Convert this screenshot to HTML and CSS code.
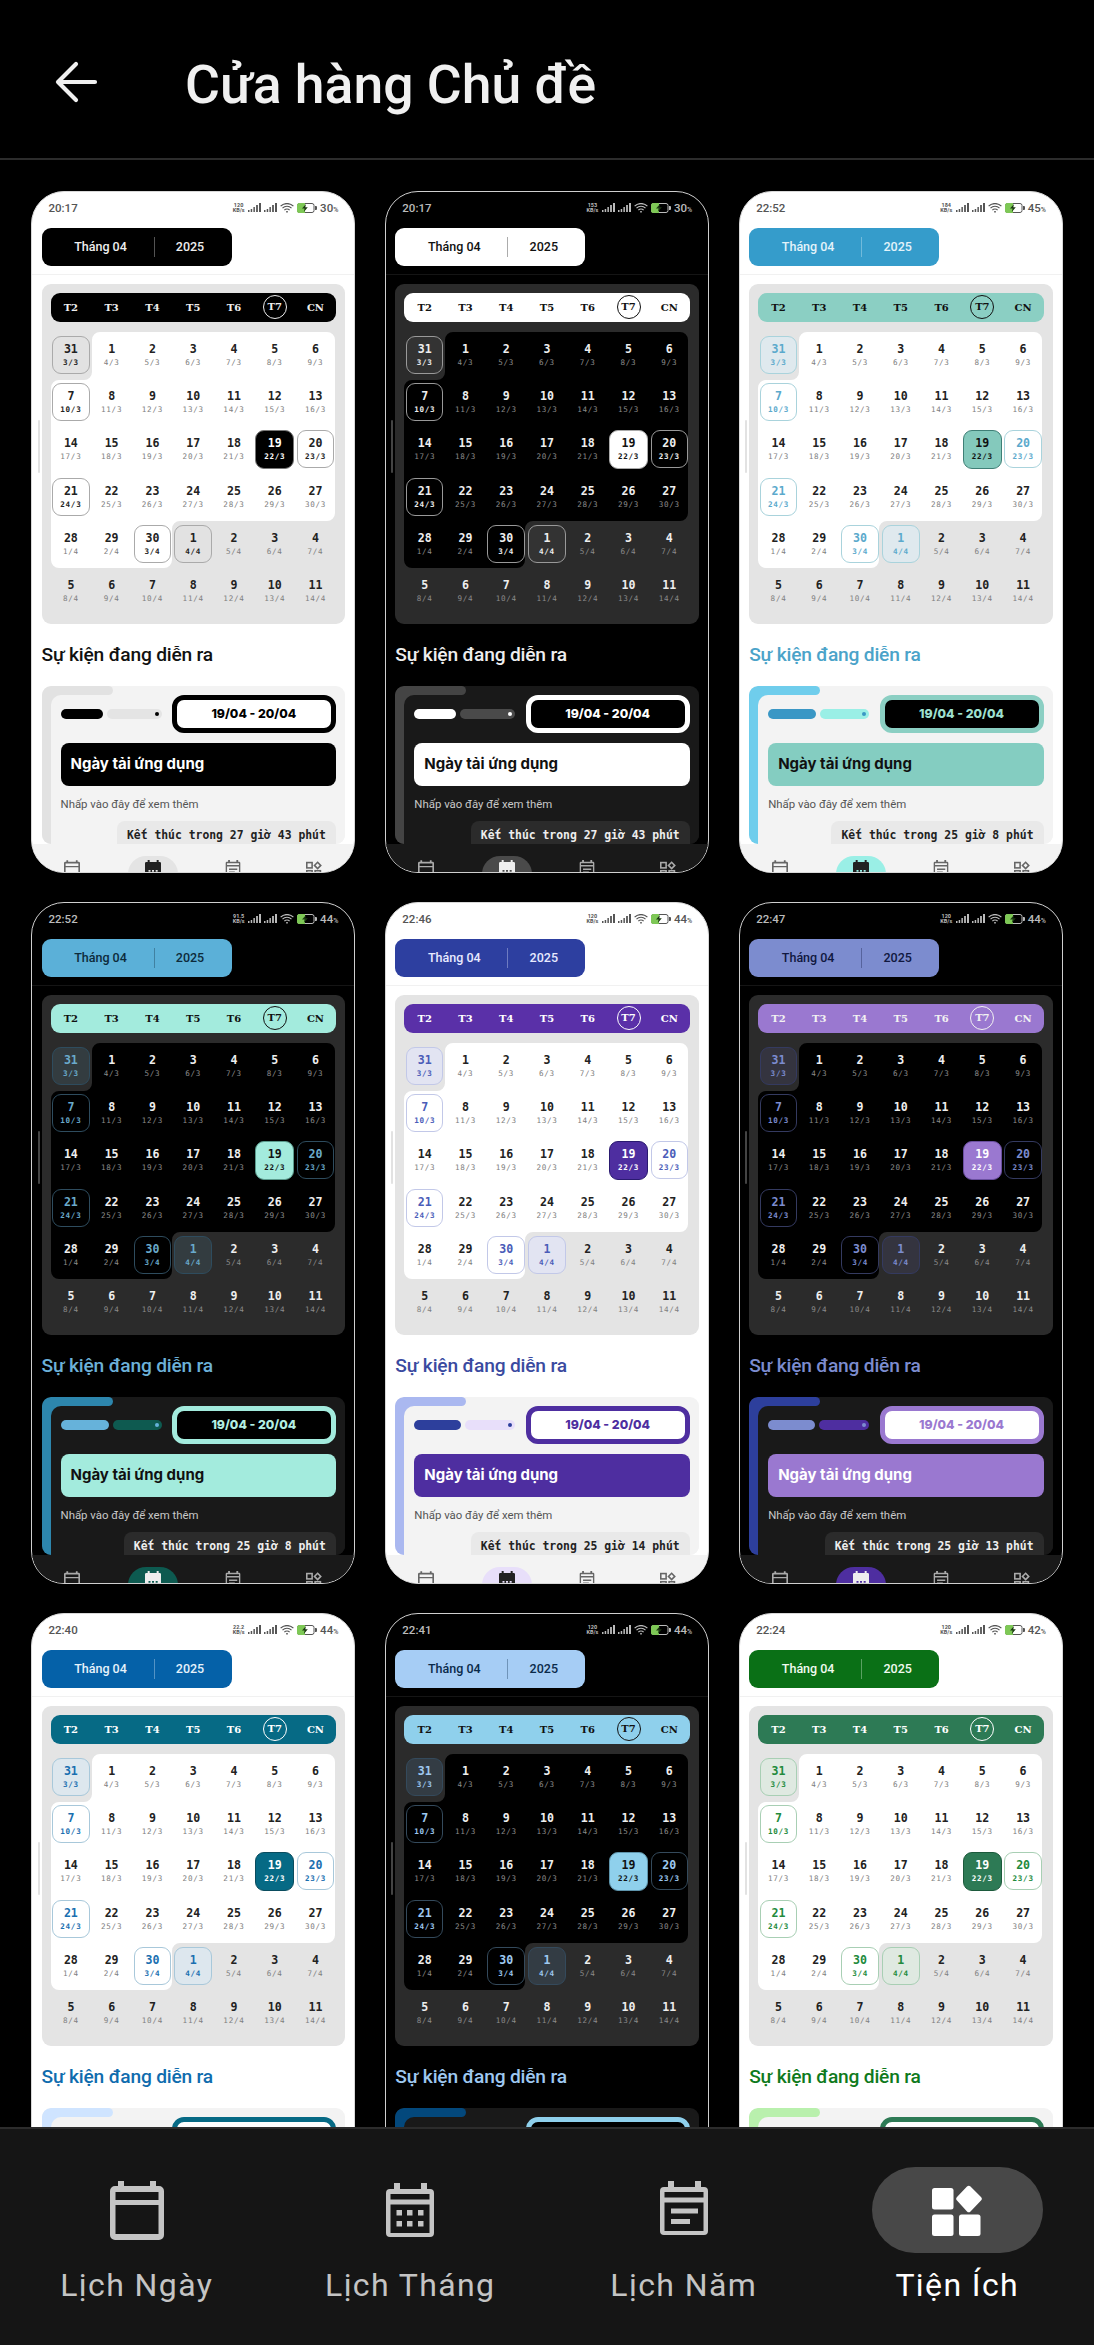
FILE: index.html
```html
<!doctype html>
<html lang="vi">

<head>
	<meta charset="UTF-8">
	<meta name="viewport" content="initial-scale=1">
	<title>Cửa hàng Chủ đề</title>
	<link rel="stylesheet" href="styles.css">
</head>

<body>
	<svg class="sprites" width="0" height="0" aria-hidden="true">
		<symbol id="ic-day" viewBox="0 0 54 59">
			<path fill-rule="evenodd" d="M8 0h6v5h26V0h6v5h3a5 5 0 0 1 5 5v44a5 5 0 0 1-5 5H5a5 5 0 0 1-5-5V10a5 5 0 0 1 5-5h3zM5.500 11v8h43v-8zM5.500 24v29h43V24z" />
		</symbol>
		<symbol id="ic-month" viewBox="0 0 48 54">
			<path fill-rule="evenodd" d="M8 0h6v6h21V0h6v6h3a4 4 0 0 1 4 4v40a4 4 0 0 1-4 4H4a4 4 0 0 1-4-4V10a4 4 0 0 1 4-4h4zM4.500 11v5.500h39V11zM4.500 21.500V50h39V21.500z" />
			<path d="M10.500 27h5.500v5.500h-5.500zM21 27h5.500v5.500H21zM32 27h5.500v5.500H32zM10.500 38h5.500v5.500h-5.500zM21 38h5.500v5.500H21zM32 38h5.500v5.500H32z" />
		</symbol>
		<symbol id="ic-month-fill" viewBox="0 0 48 54">
			<path fill-rule="evenodd" d="M8 0h6v6h21V0h6v6h3a4 4 0 0 1 4 4v40a4 4 0 0 1-4 4H4a4 4 0 0 1-4-4V10a4 4 0 0 1 4-4h4zM10.500 30v5h6v-5zM21 30v5h6v-5zM32 30v5h6v-5z" />
		</symbol>
		<symbol id="ic-year" viewBox="0 0 48 59">
			<path fill-rule="evenodd" d="M8 0h6v6h21V0h6v6h3a4 4 0 0 1 4 4v40a4 4 0 0 1-4 4H4a4 4 0 0 1-4-4V10a4 4 0 0 1 4-4h4zM4.500 11v5.500h39V11zM4.500 21.500V50h39V21.500z" />
			<path d="M11 27.500h27v5H11zM11 38h19v5H11z" />
		</symbol>
		<symbol id="ic-apps" viewBox="0 0 51 51">
			<rect x="0" y="3" width="21.500" height="21.500" rx="2.500" />
			<path d="M35 1.500a2.500 2.500 0 0 1 3.500 0l10.500 10.500a2.500 2.500 0 0 1 0 3.500l-10.500 11a2.500 2.500 0 0 1-3.500 0l-10-11a2.500 2.500 0 0 1 0-3.500z" />
			<rect x="0" y="29.500" width="21.500" height="21.500" rx="2.500" />
			<rect x="27" y="29.500" width="21.500" height="21.500" rx="2.500" />
		</symbol>
		<symbol id="ic-apps-line" viewBox="0 0 51 51">
			<g fill="none" stroke="currentColor" stroke-width="5">
				<rect x="2.500" y="5" width="17" height="17" />
				<path d="M37 4l10 10-10 10-10-10z" />
				<rect x="2.500" y="31" width="17" height="17" />
				<rect x="29" y="31" width="17" height="17" />
			</g>
		</symbol>
		<symbol id="ic-signal" viewBox="0 0 13 9">
			<path d="M0 7h1.500v2H0zM2.700 6h1.500v3H2.700zM5.400 4h1.500v5H5.400zM8.100 2h1.800v7H8.100zM11 0h2v9h-2z" />
		</symbol>
		<symbol id="ic-wifi" viewBox="0 0 14 10">
			<path fill="none" stroke="currentColor" stroke-width="1.200" d="M.6 3.200a9 9 0 0 1 12.800 0M2.500 5.200a6.200 6.200 0 0 1 9 0M4.400 7.200a3.400 3.400 0 0 1 5.200 0" />
			<path d="M5.800 8.600a1.700 1.700 0 0 1 2.400 0L7 10z" />
		</symbol>
		<symbol id="ic-battery" viewBox="0 0 20 10">
			<rect x=".5" y=".5" width="16.500" height="9" rx="2" fill="none" stroke="currentColor" />
			<path d="M2.500 0H8v10H2.500A2.500 2.500 0 0 1 0 7.500v-5A2.500 2.500 0 0 1 2.500 0z" fill="#7ec856" />
			<path d="M18 3h1a1 1 0 0 1 1 1v2a1 1 0 0 1-1 1h-1z" />
			<path d="M9 1L5 5.600h2.600L6.800 9l4-4.700H8.300z" fill="#1c3a12" />
		</symbol>
	</svg>

	<header class="topbar">
		<a class="back">
			<svg width="44" height="42" viewBox="0 0 44 42">
				<path class="back-arrow" d="M41 21H4M22 3L4 21l18 18" />
			</svg>
		</a>
		<h1>Cửa hàng Chủ đề</h1>
	</header>

	<main id="store" class="store"></main>

	<nav class="tabs">
		<a class="tab">
			<span class="tab-icon"><svg class="i-day"><use href="#ic-day" /></svg></span>
			<span class="tab-label">Lịch Ngày</span>
		</a>
		<a class="tab">
			<span class="tab-icon"><svg class="i-cal"><use href="#ic-month" /></svg></span>
			<span class="tab-label">Lịch Tháng</span>
		</a>
		<a class="tab">
			<span class="tab-icon"><svg class="i-year"><use href="#ic-year" /></svg></span>
			<span class="tab-label">Lịch Năm</span>
		</a>
		<a class="tab active">
			<span class="tab-icon"><svg class="i-apps"><use href="#ic-apps" /></svg></span>
			<span class="tab-label">Tiện Ích</span>
		</a>
	</nav>

	<script src="script.js"></script>
</body>

</html>
```

FILE: styles.css
```css
html,
body {
	margin: 0;
	padding: 0;
	width: 100%;
	height: 100%;
	background: #000;
	font-family: Roboto, "Noto Sans", sans-serif;
}

body {
	display: flex;
	flex-direction: column;
	height: 2345px;
	overflow: hidden;
}

.sprites {
	display: block;
	height: 0;
}

svg {
	display: block;
	fill: currentColor;
}

/* top bar */
.topbar {
	flex: none;
	display: flex;
	align-items: center;
	height: 158px;
	padding-left: 54px;
	border-bottom: 2px solid #2c2c2c;
	color: #f0f0f0;
}

.back {
	margin-right: 87px;
	margin-top: 6px;
}

.back-arrow {
	fill: none;
	stroke: currentColor;
	stroke-width: 4.200;
	stroke-linecap: round;
	stroke-linejoin: round;
}

h1 {
	margin: 10px 0 0 0;
	font-size: 53.500px;
	font-weight: 500;
}

/* grid of previews */
.store {
	flex: 1;
	min-height: 0;
	overflow: hidden;
	display: grid;
	grid-template-columns: repeat(3, 1fr);
	grid-auto-rows: 682px;
	gap: 29px 29.5px;
	padding: 31px 31px 0;
}

.phone {
	--bg: #fff;
	--edge: #d8d8d8;
	--rule: #f1f1f1;
	--ink: #222;
	--sub: #808080;
	--status: #555;
	--scroll: #e2e2e2;
	--panel: #e4e4e4;
	--month: #fff;
	--card: #f3f3f3;
	--hint: #555;
	--timer-bg: #e9e9e9;
	--timer-ink: #222;
	--nav: #f3f3f3;
	--nav-icon: #666;
	--nav-active: #222;
	--date-bg: #fff;

	position: relative;
	box-sizing: border-box;
	display: flex;
	flex-direction: column;
	height: 682px;
	border: 1.5px solid var(--edge);
	border-radius: 33px;
	overflow: hidden;
	background: var(--bg);
}

.phone.dark {
	--bg: #000;
	--edge: #cfcfcf;
	--rule: #151515;
	--ink: #eee;
	--sub: #8a8a8a;
	--status: #bbb;
	--scroll: #444;
	--panel: #2b2b2b;
	--month: #000;
	--card: #191919;
	--hint: #c8c8c8;
	--timer-bg: #2b2b2b;
	--timer-ink: #eee;
	--nav: #191919;
	--nav-icon: #aaa;
	--nav-active: #eee;
	--date-bg: #000;
}

/* themes */
.mono-l {
	--head: #000;
	--head-ink: #eee;
	--week: #000;
	--week-ink: #eee;
	--mark-ink: #222;
	--mark-line: #aaa;
	--mark-fill: #e2e2e2;
	--today: #000;
	--today-line: #777;
	--today-ink: #fff;
	--title: #111;
	--accent: #e2e2e2;
	--bar1: #000;
	--bar2: #e4e4e4;
	--date-line: #000;
	--date-ink: #000;
	--banner: #000;
	--banner-ink: #fff;
	--pill: #e4e4e4;
}

.mono-d {
	--head: #fff;
	--head-ink: #111;
	--week: #fff;
	--week-ink: #111;
	--mark-ink: #eee;
	--mark-line: #999;
	--mark-fill: #333;
	--today: #fff;
	--today-line: #aaa;
	--today-ink: #111;
	--title: #eee;
	--accent: #444;
	--bar1: #fff;
	--bar2: #4a4a4a;
	--date-line: #fff;
	--date-ink: #fff;
	--banner: #fff;
	--banner-ink: #111;
	--pill: #4a4a4a;
}

.teal-l {
	--head: #359ccb;
	--head-ink: #e3f3fa;
	--week: #8bcfc3;
	--week-ink: #111;
	--mark-ink: #5ba9cc;
	--mark-line: #a9d3dc;
	--mark-fill: #dfe9ee;
	--today: #84c9bc;
	--today-line: #3f7f76;
	--today-ink: #111;
	--title: #4ba3c9;
	--accent: #6fcdec;
	--bar1: #3a97c5;
	--bar2: #9aefe6;
	--date-line: #8bcfc3;
	--date-bg: #000;
	--date-ink: #9fe0d0;
	--banner: #84cdc1;
	--banner-ink: #111;
	--pill: #9aefe6;
}

.teal-d {
	--head: #5bb0d8;
	--head-ink: #0d2b3b;
	--week: #a3ebdd;
	--week-ink: #111;
	--mark-ink: #6aaacb;
	--mark-line: #2e4c5e;
	--mark-fill: #333c40;
	--today: #a3ebdd;
	--today-line: #5a9a8c;
	--today-ink: #111;
	--title: #6cb1d8;
	--accent: #2d86ad;
	--bar1: #66b2da;
	--bar2: #0e5a50;
	--date-line: #a3ebdd;
	--date-ink: #b4efe3;
	--banner: #a3ebdd;
	--banner-ink: #111;
	--pill: #0d5a50;
}

.violet-l {
	--head: #2d3fa0;
	--head-ink: #e8eaff;
	--week: #5a30a8;
	--week-ink: #fff;
	--mark-ink: #4a5cb8;
	--mark-line: #c2c8e8;
	--mark-fill: #e2e4f2;
	--today: #4e2ea0;
	--today-line: #2a1a70;
	--today-ink: #fff;
	--title: #3a4aa0;
	--accent: #aab8f0;
	--bar1: #2d3f9c;
	--bar2: #e8dffa;
	--date-line: #4e2ea0;
	--date-ink: #4e2ea0;
	--banner: #4e2ea0;
	--banner-ink: #fff;
	--pill: #e8dffa;
}

.phone.violet-d {
	--head: #7c8ccf;
	--head-ink: #101840;
	--week: #9a78d0;
	--week-ink: #f2f2f2;
	--mark-ink: #7c8ccf;
	--mark-line: #343a60;
	--mark-fill: #34343f;
	--today: #9a78d0;
	--today-line: #6a4fa0;
	--today-ink: #fff;
	--title: #7c8ccf;
	--accent: #2d3f9c;
	--bar1: #7c8ccf;
	--bar2: #4e2ea0;
	--date-line: #9a78d0;
	--date-bg: #fff;
	--date-ink: #9a78d0;
	--banner: #9a78d0;
	--banner-ink: #fff;
	--pill: #4e2ea0;
}

.blue-l {
	--head: #0561a8;
	--head-ink: #e6f2fb;
	--week: #066a85;
	--week-ink: #fff;
	--mark-ink: #1a6fb0;
	--mark-line: #a8c8da;
	--mark-fill: #dde7ee;
	--today: #066a85;
	--today-line: #0a4c5e;
	--today-ink: #fff;
	--title: #0f6cae;
	--accent: #cfe4ff;
	--bar1: #0561a8;
	--bar2: #d0e6ff;
	--date-line: #066a85;
	--date-ink: #066a85;
	--banner: #066a85;
	--banner-ink: #fff;
	--pill: #d0e6ff;
}

.blue-d {
	--head: #a6cdf5;
	--head-ink: #0a2a4a;
	--week: #8fd0ec;
	--week-ink: #111;
	--mark-ink: #9ec8f0;
	--mark-line: #344a5c;
	--mark-fill: #333c44;
	--today: #8fd0ec;
	--today-line: #5e94ab;
	--today-ink: #111;
	--title: #9ec8f0;
	--accent: #03487c;
	--bar1: #a6cdf5;
	--bar2: #03487c;
	--date-line: #8fd0ec;
	--date-ink: #8fd0ec;
	--banner: #8fd0ec;
	--banner-ink: #111;
	--pill: #03487c;
}

.green-l {
	--head: #0a7016;
	--head-ink: #f0fbf0;
	--week: #2d7a55;
	--week-ink: #fff;
	--mark-ink: #228a3c;
	--mark-line: #a8cfb4;
	--mark-fill: #dfe9e1;
	--today: #2d7a55;
	--today-line: #1c5a3c;
	--today-ink: #fff;
	--title: #0f7a1c;
	--accent: #b9f0ad;
	--bar1: #0a7016;
	--bar2: #b9f0ad;
	--date-line: #2d7a55;
	--date-ink: #2d7a55;
	--banner: #2d7a55;
	--banner-ink: #fff;
	--pill: #b9f0ad;
}

/* phone status bar */
.status {
	flex: none;
	display: flex;
	align-items: center;
	justify-content: space-between;
	height: 31px;
	padding: 0 16px 0 16.500px;
	color: var(--status);
	font-size: 11.500px;
	font-weight: 500;
}

.status-right {
	display: flex;
	align-items: center;
	gap: 3px;
}

.speed {
	width: 13px;
	font-size: 5.500px;
	line-height: 5px;
	font-weight: 700;
	text-align: center;
}

.signal {
	width: 13px;
	height: 9px;
}

.wifi {
	width: 14px;
	height: 10px;
}

.battery {
	width: 20px;
	height: 10px;
}

.level small {
	font-size: 7px;
}

/* month pill */
.month-pill {
	flex: none;
	display: flex;
	align-items: center;
	box-sizing: border-box;
	width: 190px;
	height: 38px;
	margin: 4.500px 0 0 9.500px;
	border-radius: 9px;
	background: var(--head);
	color: var(--head-ink);
	font-size: 12.500px;
	font-weight: 500;
}

.month-pill span {
	text-align: center;
}

.pill-month {
	width: 112px;
	padding-left: 6px;
	box-sizing: border-box;
}

.pill-divider {
	flex: none;
	width: 1px;
	height: 20px;
	background: var(--head-ink);
	opacity: .35;
}

.pill-year {
	flex: 1;
	padding-right: 6px;
}

.rule {
	flex: none;
	height: 1px;
	margin-top: 8px;
	background: var(--rule);
}

/* calendar */
.panel {
	flex: none;
	box-sizing: border-box;
	height: 340px;
	margin: 9px 9.500px 0;
	padding: 9px;
	border-radius: 9px;
	background: var(--panel);
}

.week {
	display: grid;
	grid-template-columns: repeat(7, 1fr);
	align-items: center;
	height: 29px;
	margin-bottom: 10px;
	border-radius: 9px;
	background: var(--week);
	color: var(--week-ink);
	font-family: "DejaVu Serif", serif;
	font-size: 10px;
	font-weight: 700;
	text-align: center;
}

.week .now {
	justify-self: center;
	width: 24px;
	height: 24px;
	box-sizing: border-box;
	border: 1px solid var(--week-ink);
	border-radius: 50%;
	line-height: 22px;
}

.days {
	display: grid;
}

.days > * {
	grid-area: 1 / 1;
}

.month-shape {
	width: 284px;
	height: 283px;
	fill: var(--month);
}

.cells {
	display: grid;
	grid-template-columns: repeat(7, 1fr);
	grid-auto-rows: 47.170px;
}

.cell {
	display: flex;
	flex-direction: column;
	align-items: center;
	justify-content: center;
	box-sizing: border-box;
	width: 37.500px;
	height: 38px;
	margin: auto;
	padding-top: 2px;
	border: 1px solid transparent;
	border-radius: 9px;
	color: var(--ink);
	font-family: "DejaVu Sans Mono", monospace;
	text-align: center;
}

.cell b {
	font-size: 11.600px;
	line-height: 13px;
}

.cell i {
	font-size: 7.600px;
	line-height: 13px;
	font-style: normal;
	letter-spacing: .7px;
	color: var(--sub);
}

.cell.mark {
	border-color: var(--mark-line);
	color: var(--mark-ink);
}

.cell.mark i {
	color: var(--mark-ink);
	font-weight: 700;
}

.cell.mark.out {
	background: var(--mark-fill);
}

.cell.today {
	width: 39px;
	height: 39px;
	border: 1.500px solid var(--today-line);
	background: var(--today);
	color: var(--today-ink);
}

.cell.today i {
	color: var(--today-ink);
	font-weight: 700;
}

/* events */
.events-title {
	flex: none;
	margin: 19px 0 0 9.500px;
	color: var(--title);
	font-size: 19.200px;
	font-weight: 500;
	line-height: 24px;
	letter-spacing: -.2px;
}

.event {
	flex: 1;
	min-height: 0;
	margin: 19px 9.500px 0;
	overflow: hidden;
	display: flex;
	flex-direction: column;
	border-radius: 9px;
	background: var(--card);
}

.event-tab {
	flex: none;
	width: 71px;
	height: 9px;
	border-radius: 9px 5px 5px 0;
	background: var(--accent);
}

.event-row {
	flex: 1;
	min-height: 0;
	background: linear-gradient(90deg, var(--accent) 20px, transparent 20px);
}

.event-body {
	display: flex;
	flex-direction: column;
	height: 100%;
	box-sizing: border-box;
	margin-left: 9px;
	padding: 0 9px 0 10px;
	border-top-left-radius: 10px;
	background: var(--card);
}

.event-top {
	display: flex;
	align-items: center;
	justify-content: space-between;
}

.bars {
	display: flex;
	gap: 4px;
	width: 101px;
	height: 10px;
}

.bar-done {
	border-radius: 5px;
	background: var(--bar1);
}

.bar-left {
	flex: 1;
	display: flex;
	align-items: center;
	justify-content: flex-end;
	padding-right: 3px;
	border-radius: 5px;
	background: var(--bar2);
}

.bar-left span {
	width: 4px;
	height: 4px;
	border-radius: 50%;
	background: var(--bar1);
}

.date {
	box-sizing: border-box;
	width: 164px;
	height: 38px;
	border: 5px solid var(--date-line);
	border-radius: 12px;
	background: var(--date-bg);
	color: var(--date-ink);
	font-family: Inter, sans-serif;
	font-size: 12.300px;
	font-weight: 800;
	line-height: 28px;
	text-align: center;
}

.banner {
	flex: none;
	height: 43px;
	margin-top: 10px;
	padding-left: 10px;
	border-radius: 8px;
	background: var(--banner);
	color: var(--banner-ink);
	font-family: Inter, sans-serif;
	font-size: 15px;
	font-weight: 700;
	line-height: 42px;
}

.hint {
	flex: none;
	margin-top: 8px;
	color: var(--hint);
	font-size: 11.400px;
	line-height: 20px;
}

.timer {
	flex: none;
	align-self: flex-end;
	height: 40px;
	margin-top: 7px;
	padding: 0 10px;
	border-radius: 8px;
	background: var(--timer-bg);
	color: var(--timer-ink);
	font-family: "DejaVu Sans Mono", monospace;
	font-size: 11.400px;
	font-weight: 700;
	line-height: 29px;
}

/* phone bottom nav */
.phone-nav {
	flex: none;
	display: grid;
	grid-template-columns: repeat(4, 1fr);
	height: 28.500px;
	background: var(--nav);
	color: var(--nav-icon);
}

.phone-nav > span {
	display: flex;
	justify-content: center;
}

.phone-nav svg {
	width: 16px;
	height: 18px;
	margin-top: 16px;
}

.phone-nav .on {
	width: 50px;
	height: 40px;
	margin: 12px auto 0;
	border-radius: 18px;
	background: var(--pill);
	color: var(--nav-active);
}

.phone-nav .on svg {
	margin-top: 4px;
}

.scroll-hint {
	position: absolute;
	top: 228px;
	left: 5.500px;
	width: 2px;
	height: 53px;
	border-radius: 1px;
	background: var(--scroll);
}

/* app bottom nav */
.tabs {
	flex: none;
	display: grid;
	grid-template-columns: repeat(4, 1fr);
	box-sizing: border-box;
	height: 218px;
	padding-top: 38px;
	border-top: 2px solid #2c2c2c;
	background: #151515;
	color: #c4c4c4;
}

.tab {
	display: flex;
	flex-direction: column;
	align-items: center;
}

.tab-icon {
	display: flex;
	align-items: center;
	justify-content: center;
	width: 171px;
	height: 86px;
	border-radius: 43px;
}

.tab-label {
	margin-top: 12px;
	font-size: 32px;
	line-height: 40px;
	letter-spacing: 1.400px;
}

.tab.active {
	color: #fff;
}

.tab.active .tab-icon {
	background: #484848;
}

.i-day {
	width: 54px;
	height: 59px;
}

.i-cal {
	width: 48px;
	height: 54px;
}

.i-year {
	width: 48px;
	height: 59px;
}

.i-apps {
	width: 51px;
	height: 51px;
}
```

FILE: script.js
```js
var phones = [
	{ theme: "mono-l", time: "20:17", speed: "120", level: "30", done: 42, timer: "27 giờ 43 phút" },
	{ theme: "mono-d dark", time: "20:17", speed: "153", level: "30", done: 42, timer: "27 giờ 43 phút" },
	{ theme: "teal-l", time: "22:52", speed: "184", level: "45", done: 48, timer: "25 giờ 8 phút" },
	{ theme: "teal-d dark", time: "22:52", speed: "91.5", level: "44", done: 48, timer: "25 giờ 8 phút" },
	{ theme: "violet-l", time: "22:46", speed: "120", level: "44", done: 47, timer: "25 giờ 14 phút" },
	{ theme: "violet-d dark", time: "22:47", speed: "120", level: "44", done: 47, timer: "25 giờ 13 phút" },
	{ theme: "blue-l", time: "22:40", speed: "22.2", level: "44", done: 47, timer: "" },
	{ theme: "blue-d dark", time: "22:41", speed: "120", level: "44", done: 47, timer: "" },
	{ theme: "green-l", time: "22:24", speed: "120", level: "42", done: 47, timer: "" }
];

var weekdays = ["T2", "T3", "T4", "T5", "T6", "T7", "CN"];
var marks = { 0: 1, 7: 1, 20: 1, 21: 1, 30: 1, 31: 1 };
var shape = "M49 0H276a8 8 0 0 1 8 8V181a8 8 0 0 1-8 8H129a8 8 0 0 0-8 8V228a8 8 0 0 1-8 8H8a8 8 0 0 1-8-8V56a8 8 0 0 1 8-8H33a8 8 0 0 0 8-8V8a8 8 0 0 1 8-8Z";

function icon(name) {
	return '<svg><use href="#' + name + '"></use></svg>';
}

function createWeek() {
	var str = "";
	for (var i = 0; i < weekdays.length; i++) {
		str += "<span" + (i == 5 ? ' class="now"' : "") + ">" + weekdays[i] + "</span>";
	}
	return str;
}

function createCells() {
	var str = "";
	for (var i = 0; i < 42; i++) {
		var day = i == 0 ? 31 : (i <= 30 ? i : i - 30);
		var lunar = i + 3 <= 30 ? (i + 3) + "/3" : (i + 3 - 30) + "/4";
		var cls = "cell";
		if (marks[i]) cls += " mark";
		if (i == 0 || i >= 31) cls += " out";
		if (i == 19) cls += " today";
		str += '<div class="' + cls + '"><b>' + day + "</b><i>" + lunar + "</i></div>";
	}
	return str;
}

function createPhone(p) {
	return '<article class="phone ' + p.theme + '">' +
		'<div class="status"><span>' + p.time + '</span><div class="status-right">' +
		'<span class="speed">' + p.speed + "<br>KB/s</span>" +
		'<svg class="signal"><use href="#ic-signal"></use></svg>' +
		'<svg class="signal"><use href="#ic-signal"></use></svg>' +
		'<svg class="wifi"><use href="#ic-wifi"></use></svg>' +
		'<svg class="battery"><use href="#ic-battery"></use></svg>' +
		'<span class="level">' + p.level + "<small>%</small></span>" +
		"</div></div>" +
		'<div class="month-pill"><span class="pill-month">Tháng 04</span><i class="pill-divider"></i><span class="pill-year">2025</span></div>' +
		'<div class="rule"></div>' +
		'<section class="panel"><div class="week">' + createWeek() + "</div>" +
		'<div class="days"><svg class="month-shape" viewBox="0 0 284 283"><path d="' + shape + '"></path></svg>' +
		'<div class="cells">' + createCells() + "</div></div></section>" +
		'<h2 class="events-title">Sự kiện đang diễn ra</h2>' +
		'<section class="event"><div class="event-tab"></div><div class="event-row"><div class="event-body">' +
		'<div class="event-top"><div class="bars"><div class="bar-done" style="width:' + p.done + 'px"></div><div class="bar-left"><span></span></div></div>' +
		'<div class="date">19/04 - 20/04</div></div>' +
		'<div class="banner">Ngày tải ứng dụng</div>' +
		'<div class="hint">Nhấp vào đây để xem thêm</div>' +
		(p.timer ? '<div class="timer">Kết thúc trong ' + p.timer + "</div>" : "") +
		"</div></div></section>" +
		'<div class="phone-nav"><span>' + icon("ic-day") + '</span><span class="on">' + icon("ic-month-fill") + "</span><span>" + icon("ic-year") + "</span><span>" + icon("ic-apps-line") + "</span></div>" +
		'<div class="scroll-hint"></div>' +
		"</article>";
}

var str = "";
for (var j = 0; j < phones.length; j++) {
	str += createPhone(phones[j]);
}
document.getElementById("store").innerHTML = str;
```
